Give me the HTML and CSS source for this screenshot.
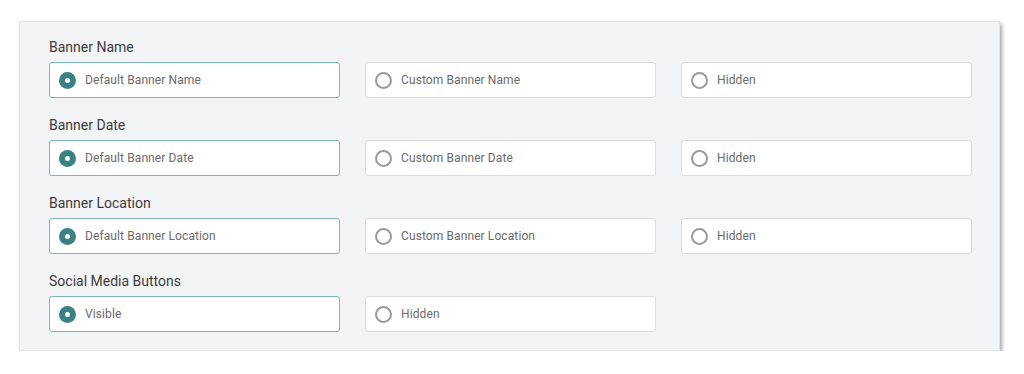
FILE: index.html
```html
<!DOCTYPE html>
<html>
<head>
<meta charset="utf-8">
<link rel="stylesheet" href="styles.css">
</head>
<body>
<div class="panel">
  <div class="group">
    <div class="label">Banner Name</div>
    <div class="options">
      <div class="option selected"><span class="radio"></span><span class="text">Default Banner Name</span></div>
      <div class="option"><span class="radio"></span><span class="text">Custom Banner Name</span></div>
      <div class="option"><span class="radio"></span><span class="text">Hidden</span></div>
    </div>
  </div>
  <div class="group">
    <div class="label">Banner Date</div>
    <div class="options">
      <div class="option selected"><span class="radio"></span><span class="text">Default Banner Date</span></div>
      <div class="option"><span class="radio"></span><span class="text">Custom Banner Date</span></div>
      <div class="option"><span class="radio"></span><span class="text">Hidden</span></div>
    </div>
  </div>
  <div class="group">
    <div class="label">Banner Location</div>
    <div class="options">
      <div class="option selected"><span class="radio"></span><span class="text">Default Banner Location</span></div>
      <div class="option"><span class="radio"></span><span class="text">Custom Banner Location</span></div>
      <div class="option"><span class="radio"></span><span class="text">Hidden</span></div>
    </div>
  </div>
  <div class="group">
    <div class="label">Social Media Buttons</div>
    <div class="options">
      <div class="option selected"><span class="radio"></span><span class="text">Visible</span></div>
      <div class="option"><span class="radio"></span><span class="text">Hidden</span></div>
    </div>
  </div>
</div>
</body>
</html>
```
FILE: styles.css
```css
html, body {
  margin: 0;
  padding: 0;
  background: #ffffff;
}
body {
  font-family: Roboto, "Liberation Sans", sans-serif;
}
.panel {
  margin: 21px 0 0 19px;
  width: 981px;
  box-sizing: border-box;
  padding: 16px 30px 18px 30px;
  background: #f3f4f6;
  border: 1px solid #e4e5e7;
  box-shadow: 2px 3px 4px rgba(0, 0, 0, 0.35);
  display: flex;
  flex-direction: column;
  gap: 18px;
}
.group {
  display: flex;
  flex-direction: column;
  gap: 6px;
}
.label {
  font-size: 14px;
  line-height: 18px;
  color: #3b3b3b;
  margin-left: -1px;
}
.options {
  display: grid;
  grid-template-columns: repeat(3, 291px);
  column-gap: 25px;
  margin-left: -1px;
}
.option {
  height: 36px;
  box-sizing: border-box;
  background: #ffffff;
  border: 1px solid #dcdcdc;
  border-radius: 3px;
  display: flex;
  align-items: center;
  padding-left: 9px;
  gap: 9px;
}
.option.selected {
  border-color: #7fb5b6;
}
.radio {
  width: 17px;
  height: 17px;
  box-sizing: border-box;
  border-radius: 50%;
  border: 2px solid #9a9a9a;
  flex: none;
  position: relative;
}
.option.selected .radio {
  border: none;
  background: #3b8082;
}
.option.selected .radio::after {
  content: "";
  position: absolute;
  left: 6px;
  top: 6px;
  width: 5px;
  height: 5px;
  border-radius: 50%;
  background: #ffffff;
}
.text {
  font-size: 12px;
  color: #6a6a6a;
  line-height: 14px;
  letter-spacing: 0.1px;
}
```
